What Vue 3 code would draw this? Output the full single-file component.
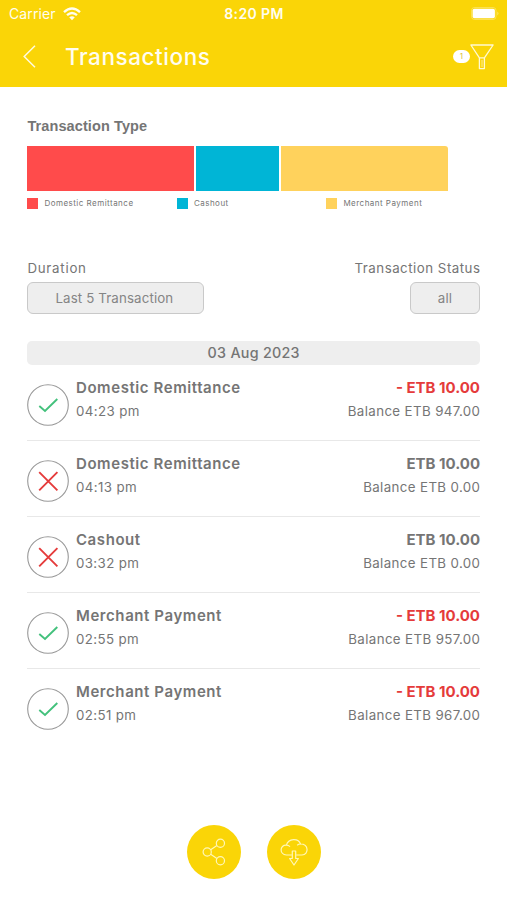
<script setup>
const segments = [
  { name: 'Domestic Remittance', share: 168, color: '#ff4b4b' },
  { name: 'Cashout', share: 84, color: '#00b5d6' },
  { name: 'Merchant Payment', share: 168, color: '#ffd25c' }
]
const rows = [
  { kind: 'remit', title: 'Domestic Remittance', time: '04:23 pm', amount: '- ETB 10.00', balance: 'Balance ETB 947.00', ok: true },
  { kind: 'remit', title: 'Domestic Remittance', time: '04:13 pm', amount: 'ETB 10.00', balance: 'Balance ETB 0.00', ok: false },
  { kind: 'cash', title: 'Cashout', time: '03:32 pm', amount: 'ETB 10.00', balance: 'Balance ETB 0.00', ok: false },
  { kind: 'merchant', title: 'Merchant Payment', time: '02:55 pm', amount: '- ETB 10.00', balance: 'Balance ETB 957.00', ok: true },
  { kind: 'merchant', title: 'Merchant Payment', time: '02:51 pm', amount: '- ETB 10.00', balance: 'Balance ETB 967.00', ok: true }
]
</script>

<template>
  <div class="screen">
    <header>
      <div class="status">
        <div class="carrier">
          <span>Carrier</span>
          <svg width="18" height="14" viewBox="0 0 18 14" fill="none" stroke="#fffef0" stroke-width="2.3">
            <path d="M1 5.2Q9-2.2 17 5.2M4 8.2Q9 3.7 14 8.2" />
            <path d="M6.2 10.3Q9 8 11.8 10.3L9 13.3Z" fill="#fffef0" stroke="none" />
          </svg>
        </div>
        <b class="clock">8:20 PM</b>
        <svg class="battery" width="28" height="13" viewBox="0 0 28 13">
          <rect x=".5" y=".5" width="24.5" height="12" rx="3" fill="none" stroke="#fff" stroke-opacity=".3" />
          <rect x="1.6" y="1.8" width="22.3" height="9.4" rx="1.8" fill="#fff" />
          <path d="M26.3 4.5Q28.6 6.5 26.3 8.5Z" fill="#fff" fill-opacity=".4" />
        </svg>
      </div>
      <div class="nav">
        <svg class="back" width="13" height="23" viewBox="0 0 13 23" fill="none" stroke="#fffbe0" stroke-width="1.5">
          <path d="M12 .8L1.2 11.5L12 22.2" />
        </svg>
        <h1>Transactions</h1>
        <span class="count">1</span>
        <svg class="filter" width="24" height="26" viewBox="0 0 24 26" fill="none" stroke="#fff9d2" stroke-width="1.3" stroke-linejoin="round">
          <path d="M.9 1H23.1L14.4 13.8V24.6H9.4V13.8ZM9.4 13.8H14.4" />
          <path d="M12 16V23" stroke-width=".7" />
        </svg>
      </div>
    </header>

    <main>
      <h2>Transaction Type</h2>
      <div class="chart">
        <i v-for="s in segments" :key="s.name" :style="{ flexGrow: s.share, background: s.color }"></i>
      </div>
      <div class="legend">
        <div v-for="s in segments" :key="s.name"><i :style="{ background: s.color }"></i><span>{{ s.name }}</span></div>
      </div>

      <div class="filters">
        <div class="field">
          <label class="l-duration">Duration</label>
          <button class="duration">Last 5 Transaction</button>
        </div>
        <div class="field right">
          <label class="l-status">Transaction Status</label>
          <button class="all">all</button>
        </div>
      </div>

      <div class="date"><span>03 Aug 2023</span></div>

      <section>
        <article v-for="r in rows" :key="r.time">
          <svg class="mark" width="42" height="42" viewBox="0 0 42 42" fill="none">
            <circle cx="21" cy="21" r="20.3" stroke="#999" stroke-width="1.1" />
            <path v-if="r.ok" d="M12.3 22L18 27L30.3 15" stroke="#43c17c" stroke-width="1.9" />
            <path v-else d="M12.2 12.2L30.4 30.4M30.4 12.2L12.2 30.4" stroke="#e53b3b" stroke-width="1.9" />
          </svg>
          <div class="what">
            <strong :class="r.kind">{{ r.title }}</strong>
            <span class="time">{{ r.time }}</span>
          </div>
          <div class="sum">
            <b :class="{ debit: r.amount[0] === '-' }">{{ r.amount }}</b>
            <span class="balance">{{ r.balance }}</span>
          </div>
        </article>
      </section>
    </main>

    <footer>
      <button aria-label="Share">
        <svg width="24" height="28" viewBox="0 0 24 28" fill="none" stroke="#fff7b8" stroke-width="1.2">
          <circle cx="5.2" cy="14" r="4.1" />
          <circle cx="18.4" cy="5.2" r="4.1" />
          <circle cx="18.4" cy="22.8" r="4.1" />
          <path d="M8.7 11.8L14.9 7.5M8.7 16.2L14.9 20.5" />
        </svg>
      </button>
      <button aria-label="Download">
        <svg width="28" height="28" viewBox="0 0 28 28" fill="none" stroke="#fff7b8" stroke-width="1.2" stroke-linejoin="round">
          <path d="M11.8 17H6.4C-.8 16.5-.5 6.8 6.4 7.2C8.3-.2 18.6-.1 20.5 6C28.8 6 29.2 16.4 22 17H16.2" />
          <path d="M6.4 7.2Q8.5 7.2 10 8.7M20.5 6Q18.6 6 17.2 7.2" />
          <path d="M12.3 13H15.7V20.5H18.4L14 27L9.6 20.5H12.3Z" />
        </svg>
      </button>
    </footer>
  </div>
</template>

<style>
body {
  background: #fff;
}
</style>

<style scoped>
* {
  box-sizing: border-box;
}
.screen {
  height: 900px;
  display: flex;
  flex-direction: column;
  overflow: hidden;
  background: #fff;
  color: #757575;
  font-family: Inter, "Liberation Sans", sans-serif;
  white-space: nowrap;
}
header {
  height: 87px;
  background: #fad507;
  color: #fffdf0;
}
.status {
  display: grid;
  grid-template-columns: 1fr auto 1fr;
  align-items: center;
  height: 27px;
  padding: 0 8px 0 9px;
}
.carrier {
  display: flex;
  align-items: center;
  gap: 7px;
  font-size: 14px;
  letter-spacing: .1px;
}
.clock {
  font-size: 14px;
  font-weight: 600;
  letter-spacing: .4px;
}
.battery {
  justify-self: end;
}
.nav {
  display: flex;
  align-items: center;
  height: 59px;
  padding: 0 13px 0 23px;
}
h1 {
  flex: 1;
  margin: 0 0 0 29px;
  font-size: 22.5px;
  line-height: 30px;
  font-weight: 500;
  letter-spacing: .55px;
}
.count {
  width: 17px;
  height: 13px;
  border-radius: 7px;
  background: #fff;
  color: #dcc03a;
  font-size: 8px;
  line-height: 13px;
  text-align: center;
}
main {
  padding: 29.5px 27px 0 27.4px;
}
h2 {
  margin: 0;
  height: 29.5px;
  font: bold 14.5px/18px "Liberation Sans", sans-serif;
  letter-spacing: .1px;
}
.chart {
  display: flex;
  gap: 1.5px;
  width: 420.6px;
  height: 45px;
  border-radius: 0 3px 0 0;
  overflow: hidden;
}
.chart i {
  flex-basis: 0;
}
.legend {
  display: grid;
  grid-template-columns: repeat(3, 149.5px);
  margin-top: 6px;
}
.legend div {
  display: flex;
  align-items: center;
  gap: 6px;
  height: 12px;
  font-size: 8px;
  letter-spacing: .48px;
}
.legend i {
  width: 11px;
  height: 11px;
}
.filters {
  display: flex;
  justify-content: space-between;
  margin-top: 50px;
}
.field {
  display: flex;
  flex-direction: column;
}
.right {
  align-items: flex-end;
}
label {
  height: 23px;
  font-size: 13.3px;
  line-height: 18px;
}
.l-duration {
  letter-spacing: .75px;
}
.l-status {
  margin-right: -.5px;
  letter-spacing: .5px;
}
button {
  padding: 0;
  border: 0;
  font-family: inherit;
  color: inherit;
}
.field button {
  height: 32px;
  border: 1px solid #c9c9c9;
  border-radius: 6px;
  background: #eee;
  color: #858585;
  font-size: 13.3px;
  letter-spacing: .13px;
}
.field .duration {
  width: 177px;
  padding-right: 3px;
}
.all {
  width: 70px;
}
.date {
  height: 24px;
  margin-top: 27px;
  border-radius: 5px;
  background: #eee;
  text-align: center;
  font-size: 14.3px;
  line-height: 24px;
  font-weight: 500;
  letter-spacing: .28px;
}
article {
  display: flex;
  height: 76.1px;
  padding-top: 11.5px;
  border-bottom: 1.5px solid #e8e8e8;
}
article:last-child {
  border: 0;
}
.mark {
  flex: none;
  margin: 7.4px 6.6px 0 0;
}
.what,
.sum {
  display: flex;
  flex-direction: column;
}
.sum {
  margin-left: auto;
  align-items: flex-end;
}
.what strong,
.sum b {
  font-size: 15px;
  line-height: 22px;
  font-weight: 600;
}
.sum b {
  font-weight: 700;
}
.what strong {
  letter-spacing: .58px;
}
.sum .debit {
  color: #e53b3b;
}
.time,
.balance {
  margin-top: 1.5px;
  font-size: 13.3px;
  line-height: 22px;
  letter-spacing: .38px;
}
.balance {
  margin-right: -.4px;
}
footer {
  display: flex;
  justify-content: center;
  gap: 26px;
  margin: auto 0 21px;
}
footer button {
  display: grid;
  place-items: center;
  width: 54px;
  height: 54px;
  border-radius: 50%;
  background: #fad507;
}
</style>
